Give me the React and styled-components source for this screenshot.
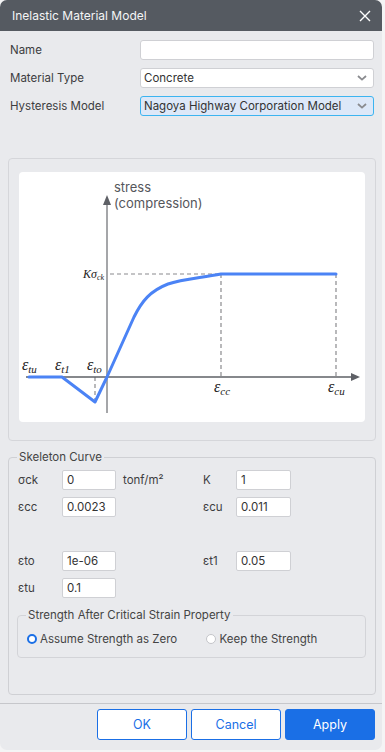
import styled, { createGlobalStyle } from "styled-components";

const GlobalStyle = createGlobalStyle`
	body {
		margin: 0;
		background: #f4f4f5;
		font-family: Inter, "Noto Sans", "Liberation Sans", sans-serif;
	}
	* { box-sizing: border-box; }
`;

const Dialog = styled.div`
	width: 382px;
	height: 750px;
	background: #e9eaed;
	border-radius: 7px;
	overflow: hidden;
	display: flex;
	flex-direction: column;
	color: #3d3d3f;
	font-size: 11.5px;
`;

const TitleBar = styled.div`
	height: 31px;
	flex: none;
	background: #555a61;
	color: #f4f5f6;
	display: flex;
	align-items: center;
	justify-content: space-between;
	padding: 0 10px 0 12px;
	font-size: 12px;
`;

const CloseButton = styled.span`
	display: flex;
	width: 14px;
	height: 14px;
`;

const Form = styled.div`
	display: flex;
	flex-direction: column;
	gap: 8px;
	padding: 9px 8px 0 10px;
`;

const Row = styled.div`
	display: flex;
	align-items: center;
	height: 20px;
`;

const Label = styled.span`
	width: 130px;
	flex: none;
`;

const Field = styled.div`
	position: relative;
	width: 234px;
	height: 20px;
	background: ${(p) => (p.$active ? "#dde8f8" : "#fff")};
	border: 1px solid ${(p) => (p.$active ? "#3cb4f0" : "#cfd0d4")};
	border-radius: 3px;
	display: flex;
	align-items: center;
	padding: 0 3px;
	color: #333;
`;

const Chevron = styled.svg`
	position: absolute;
	right: 6px;
	top: 6px;
`;

const ChartPanel = styled.div`
	margin: 42px 6px 0 8px;
	border: 1px solid #d5d6da;
	border-radius: 4px;
	padding: 13px 10px 18px 10px;
`;

const ChartBox = styled.div`
	width: 346px;
	height: 250px;
	background: #fff;
	border-radius: 4px;
	display: flex;
`;

const Group = styled.fieldset`
	margin: 9px 6px 0 8px;
	padding: 4px 9px 36px 9px;
	border: 1px solid #cfd0d4;
	border-radius: 4px;
	min-width: 0;
`;

const Legend = styled.legend`
	padding: 0 2px;
	margin-left: -1px;
	font-size: 11.5px;
	color: #444;
`;

const ParamGrid = styled.div`
	display: grid;
	grid-template-columns: 44px 54px 87px 33px 55px;
	grid-auto-rows: 20px;
	row-gap: 7px;
	align-items: center;
	margin-top: 2px;
`;

const Spacer = styled.div`
	grid-column: 1 / -1;
	height: 20px;
`;

const SmallInput = styled.div`
	height: 20px;
	background: #fff;
	border: 1px solid #cfd0d4;
	border-radius: 2px;
	display: flex;
	align-items: center;
	padding: 0 4px;
	color: #333;
`;

const Unit = styled.span`
	padding-left: 7px;
`;

const SubGroup = styled.fieldset`
	margin: 10px 0 0 -1px;
	padding: 8px 9px 9px 9px;
	border: 1px solid #d3d4d8;
	border-radius: 4px;
	min-width: 0;
`;

const RadioRow = styled.div`
	display: flex;
	align-items: center;
	height: 18px;
`;

const RadioOption = styled.label`
	display: flex;
	align-items: center;
	gap: 3px;
	width: ${(p) => p.$w}px;
	color: #444;
`;

const RadioDot = styled.span`
	width: 10px;
	height: 10px;
	border-radius: 50%;
	background: #fff;
	border: ${(p) => (p.$on ? "2.5px solid #1a6fe6" : "1px solid #c4c5c9")};
`;

const Footer = styled.div`
	margin-top: auto;
	border-top: 1px solid #c6c7cb;
	display: flex;
	justify-content: flex-end;
	gap: 4px;
	padding: 5px 7px 10px 0;
`;

const Button = styled.button`
	width: 90px;
	height: 31px;
	border-radius: 3px;
	font-family: inherit;
	font-size: 12.5px;
	border: 1px solid #1a6fe6;
	background: ${(p) => (p.$primary ? "#1a6fe6" : "#fff")};
	color: ${(p) => (p.$primary ? "#fff" : "#1a6fe6")};
`;

const ChevronIcon = () => (
	<Chevron width="10" height="6" viewBox="0 0 10 6">
		<path d="M1 1l4 3.6L9 1" fill="none" stroke="#8a8b8f" strokeWidth="1.8" />
	</Chevron>
);

const Eps = ({ x, y, sub }) => (
	<text x={x} y={y} fontFamily='"Liberation Serif", serif' fontStyle="italic" fill="#222">
		<tspan fontSize="16">ε</tspan>
		<tspan fontSize="11" dy="3">{sub}</tspan>
	</text>
);

const Chart = () => (
	<svg width="346" height="250" viewBox="19 173 346 250">
		<g stroke="#8a8a8e" strokeWidth="1.2" strokeDasharray="4 3" fill="none">
			<path d="M110 275H221" />
			<path d="M221 275V378" />
			<path d="M336 275V378" />
			<path d="M95 378V403" />
		</g>
		<path d="M107 414V202" stroke="#87888c" strokeWidth="1.5" />
		<path d="M103 206L107 196L111 206Z" fill="#5e6066" />
		<path d="M26 378H353" stroke="#5e6066" strokeWidth="1.5" />
		<path d="M351 374L360 378L351 382Z" fill="#5e6066" />
		<path
			d="M29 378H62L95 403L107 378L134 318C142 302 150 292 168 285C182 280 200 279 221 275H336"
			fill="none"
			stroke="#4b83f5"
			strokeWidth="3"
			strokeLinejoin="round"
			strokeLinecap="round"
		/>
		<text x="114" y="193" fontSize="13" fill="#55565b" fontFamily="Inter, sans-serif">stress</text>
		<text x="114" y="209" fontSize="13" fill="#55565b" fontFamily="Inter, sans-serif">(compression)</text>
		<text x="83" y="279" fill="#222" fontFamily='"Liberation Serif", serif' fontStyle="italic">
			<tspan fontSize="12">Kσ</tspan>
			<tspan fontSize="8" dy="2">ck</tspan>
		</text>
		<Eps x={22} y={371} sub="tu" />
		<Eps x={55} y={371} sub="t1" />
		<Eps x={87} y={371} sub="to" />
		<Eps x={214} y={393} sub="cc" />
		<Eps x={328} y={393} sub="cu" />
	</svg>
);

const App = () => {
	return (
		<>
			<GlobalStyle />
			<Dialog>
				<TitleBar>
					Inelastic Material Model
					<CloseButton>
						<svg width="14" height="14" viewBox="0 0 14 14">
							<path d="M2 2L12 12M12 2L2 12" stroke="#fff" strokeWidth="1.4" />
						</svg>
					</CloseButton>
				</TitleBar>
				<Form>
					<Row>
						<Label>Name</Label>
						<Field />
					</Row>
					<Row>
						<Label>Material Type</Label>
						<Field>
							Concrete
							<ChevronIcon />
						</Field>
					</Row>
					<Row>
						<Label>Hysteresis Model</Label>
						<Field $active>
							Nagoya Highway Corporation Model
							<ChevronIcon />
						</Field>
					</Row>
				</Form>
				<ChartPanel>
					<ChartBox>
						<Chart />
					</ChartBox>
				</ChartPanel>
				<Group>
					<Legend>Skeleton Curve</Legend>
					<ParamGrid>
						<span>σck</span>
						<SmallInput>0</SmallInput>
						<Unit>tonf/m²</Unit>
						<span>K</span>
						<SmallInput>1</SmallInput>

						<span>εcc</span>
						<SmallInput>0.0023</SmallInput>
						<span />
						<span>εcu</span>
						<SmallInput>0.011</SmallInput>

						<Spacer />

						<span>εto</span>
						<SmallInput>1e-06</SmallInput>
						<span />
						<span>εt1</span>
						<SmallInput>0.05</SmallInput>

						<span>εtu</span>
						<SmallInput>0.1</SmallInput>
					</ParamGrid>
					<SubGroup>
						<Legend>Strength After Critical Strain Property</Legend>
						<RadioRow>
							<RadioOption $w={180}>
								<RadioDot $on />
								Assume Strength as Zero
							</RadioOption>
							<RadioOption $w={150}>
								<RadioDot />
								Keep the Strength
							</RadioOption>
						</RadioRow>
					</SubGroup>
				</Group>
				<Footer>
					<Button>OK</Button>
					<Button>Cancel</Button>
					<Button $primary>Apply</Button>
				</Footer>
			</Dialog>
		</>
	);
};

export default App;
